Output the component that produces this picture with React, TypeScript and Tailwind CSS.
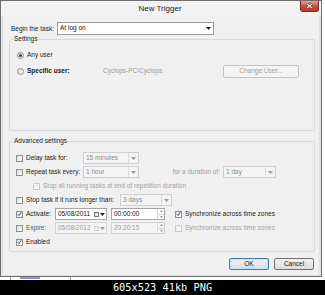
import React from "react";

function Check({ on, off }: { on?: boolean; off?: boolean }) {
  return (
    <span
      className={`flex h-[7px] w-[7px] shrink-0 items-center justify-center border ${
        off ? "border-[#c9c9c9] bg-[#f4f4f4]" : "border-[#8e8f8f] bg-gradient-to-br from-[#dcdcdc] to-white"
      }`}
    >
      {on && (
        <svg width="6" height="6" viewBox="0 0 6 6">
          <path d="M0.8 3.2 L2.4 4.8 L5.2 0.9" fill="none" stroke="#3d5488" strokeWidth="1.2" />
        </svg>
      )}
    </span>
  );
}

function Radio({ on }: { on?: boolean }) {
  return (
    <span className="flex h-[7px] w-[7px] shrink-0 items-center justify-center rounded-full border border-[#8e8f8f] bg-gradient-to-br from-[#d8d8d8] to-white">
      {on && <span className="h-[3px] w-[3px] rounded-full bg-[#23415f]" />}
    </span>
  );
}

function Arrow({ dim }: { dim?: boolean }) {
  return (
    <svg width="5" height="3" viewBox="0 0 5 3">
      <path d="M0 0 H5 L2.5 3 Z" fill={dim ? "#9a9a9a" : "#222"} />
    </svg>
  );
}

function Combo({ text, w, off }: { text: string; w: string; off?: boolean }) {
  return (
    <div
      className={`flex h-[12px] ${w} shrink-0 items-center border ${
        off ? "border-[#cfcfcf] bg-[#f4f4f4] text-[#8d8d8d]" : "border-[#a5a5a5] bg-white text-[#111]"
      }`}
    >
      <span className="flex-1 pl-[2px] leading-none">{text}</span>
      <span className="flex h-full w-[10px] items-center justify-center border-l border-[#dcdcdc]">
        <Arrow dim />
      </span>
    </div>
  );
}

function DateField({ text, off }: { text: string; off?: boolean }) {
  return (
    <div
      className={`flex h-[12px] w-[52px] shrink-0 items-center border ${
        off ? "border-[#d3d3d3] bg-[#f4f4f4] text-[#9c9c9c]" : "border-[#a5a5a5] bg-white text-[#111]"
      }`}
    >
      <span className="flex-1 pl-[2px] leading-none">{text}</span>
      <span className={`mr-[1px] h-[5px] w-[5px] border ${off ? "border-[#cfcfcf]" : "border-[#7d7d7d] bg-[#e4e4e4]"}`} />
      <span className="mr-[1px] flex w-[5px] justify-center">
        <Arrow dim={off} />
      </span>
    </div>
  );
}

function TimeField({ text, off }: { text: string; off?: boolean }) {
  return (
    <div
      className={`flex h-[12px] w-[54px] shrink-0 items-center border ${
        off ? "border-[#d3d3d3] bg-[#f4f4f4] text-[#9c9c9c]" : "border-[#a5a5a5] bg-white text-[#111]"
      }`}
    >
      <span className="flex-1 pl-[2px] leading-none">{text}</span>
      <span className="flex h-full w-[7px] flex-col border-l border-[#d6d6d6]">
        <span className="flex flex-1 items-center justify-center border-b border-[#d6d6d6]">
          <svg width="3" height="2" viewBox="0 0 3 2">
            <path d="M0 2 L1.5 0 L3 2 Z" fill="#9a9a9a" />
          </svg>
        </span>
        <span className="flex flex-1 items-center justify-center">
          <svg width="3" height="2" viewBox="0 0 3 2">
            <path d="M0 0 H3 L1.5 2 Z" fill="#9a9a9a" />
          </svg>
        </span>
      </span>
    </div>
  );
}

export default function App() {
  return (
    <div className="flex h-[295px] w-[325px] flex-col overflow-hidden bg-white font-['Liberation_Sans',Arial,sans-serif] text-[6.5px] text-[#1b1b1b]">
      {/* dialog window */}
      <div className="flex h-[277px] w-[322px] flex-col border border-[#6e6e6e] bg-[#dfe2e6]">
        <div className="flex h-[15px] items-start bg-[#f1f2f4]">
          <div className="flex-1" />
          <div className="pt-[4px] text-[8px] leading-none text-[#222]">New Trigger</div>
          <div className="flex flex-1 justify-end pr-[2px]">
            <div className="flex h-[11px] w-[19px] items-center justify-center rounded-b-[3px] border border-t-0 border-[#7b2b22] bg-gradient-to-b from-[#e4a091] via-[#c9513e] to-[#b93a28]">
              <svg width="7" height="6" viewBox="0 0 7 6">
                <path d="M1 1 L6 5 M6 1 L1 5" stroke="#5a1a12" strokeWidth="2.4" />
                <path d="M1 1 L6 5 M6 1 L1 5" stroke="#fff" strokeWidth="1.3" />
              </svg>
            </div>
          </div>
        </div>

        <div className="mx-[2px] mb-[1px] flex flex-1 flex-col bg-[#f0f0f0]">
          <div className="mt-[6px] flex h-[13px] items-center pl-[8px]">
            <span className="w-[46px]">Begin the task:</span>
            <div className="flex h-[13px] w-[157px] items-center border border-[#9a9a9a] bg-white">
              <span className="flex-1 pl-[2px] leading-none text-[#111]">At log on</span>
              <span className="mr-[2px]">
                <Arrow />
              </span>
            </div>
          </div>

          <fieldset className="ml-[6px] h-[96px] w-[306px] rounded-[2px] border border-[#d5dadf]">
            <legend className="ml-[3px] px-[1px] leading-[8px]">Settings</legend>
            <div className="mt-[6px] flex h-[12px] items-center gap-[3px] pl-[7px]">
              <Radio on />
              <span>Any user</span>
            </div>
            <div className="mt-[3px] flex h-[14px] items-center pl-[7px]">
              <Radio />
              <span className="ml-[3px] w-[76px] font-bold">Specific user:</span>
              <span className="w-[120px] text-[#9b9b9b]">Cyclops-PC\Cyclops</span>
              <div className="flex h-[13px] w-[76px] items-center justify-center rounded-[2px] border border-[#c4c4c4] bg-[#f4f4f4] text-[#9d9d9d]">
                Change User...
              </div>
            </div>
          </fieldset>

          <fieldset className="ml-[6px] mt-[6px] h-[115px] w-[306px] rounded-[2px] border border-[#d5dadf]">
            <legend className="ml-[3px] px-[1px] leading-[8px]">Advanced settings</legend>
            <div className="mt-[6px] flex h-[14px] items-center pl-[6px]">
              <Check />
              <span className="ml-[3px] w-[57px]">Delay task for:</span>
              <Combo text="15 minutes" w="w-[56px]" off />
            </div>
            <div className="flex h-[14px] items-center pl-[6px]">
              <Check />
              <span className="ml-[3px] w-[57px]">Repeat task every:</span>
              <Combo text="1 hour" w="w-[56px]" off />
              <span className="w-[84px] pr-[3px] text-right text-[#9b9b9b]">for a duration of:</span>
              <Combo text="1 day" w="w-[53px]" off />
            </div>
            <div className="flex h-[14px] items-center pl-[23px]">
              <Check off />
              <span className="ml-[3px] text-[#a3a3a3]">Stop all running tasks at end of repetition duration</span>
            </div>
            <div className="flex h-[14px] items-center pl-[6px]">
              <Check />
              <span className="ml-[3px] w-[94px]">Stop task if it runs longer than:</span>
              <Combo text="3 days" w="w-[52px]" off />
            </div>
            <div className="flex h-[14px] items-center pl-[6px]">
              <Check on />
              <span className="ml-[3px] w-[29px]">Activate:</span>
              <DateField text="05/08/2011" />
              <span className="ml-[4px]" />
              <TimeField text="00:00:00" />
              <span className="ml-[10px]" />
              <Check on />
              <span className="ml-[3px]">Synchronize across time zones</span>
            </div>
            <div className="flex h-[14px] items-center pl-[6px]">
              <Check />
              <span className="ml-[3px] w-[29px] text-[#555]">Expire:</span>
              <DateField text="05/08/2012" off />
              <span className="ml-[4px]" />
              <TimeField text="20:20:15" off />
              <span className="ml-[10px]" />
              <Check off />
              <span className="ml-[3px] text-[#a3a3a3]">Synchronize across time zones</span>
            </div>
            <div className="flex h-[14px] items-center pl-[6px]">
              <Check on />
              <span className="ml-[3px]">Enabled</span>
            </div>
          </fieldset>

          <div className="mt-[6px] flex justify-end gap-[5px] pr-[5px]">
            <div className="flex h-[12px] w-[40px] items-center justify-center rounded-[2px] border border-[#3c7fb1] bg-gradient-to-b from-[#f2f2f2] to-[#dcdcdc] shadow-[inset_0_0_0_1px_#bfe3f7]">
              OK
            </div>
            <div className="flex h-[12px] w-[40px] items-center justify-center rounded-[2px] border border-[#707070] bg-gradient-to-b from-[#f2f2f2] to-[#dcdcdc]">
              Cancel
            </div>
          </div>
        </div>
      </div>

      {/* page behind the dialog, mostly hidden */}
      <div className="flex h-[3px] items-start overflow-hidden bg-white">
        <span className="ml-[10px] h-full w-px bg-[#9a9a9a]" />
        <span className="ml-[9px] h-[2px] w-[20px] bg-[#7f9bd0]" />
        <span className="ml-[30px] h-full w-px bg-[#9a9a9a]" />
      </div>

      {/* thumbnail caption */}
      <div className="flex h-[15px] items-center justify-center bg-black font-['DejaVu_Sans_Mono',monospace] text-[10.3px] leading-none text-white">
        605x523 41kb PNG
      </div>
    </div>
  );
}
